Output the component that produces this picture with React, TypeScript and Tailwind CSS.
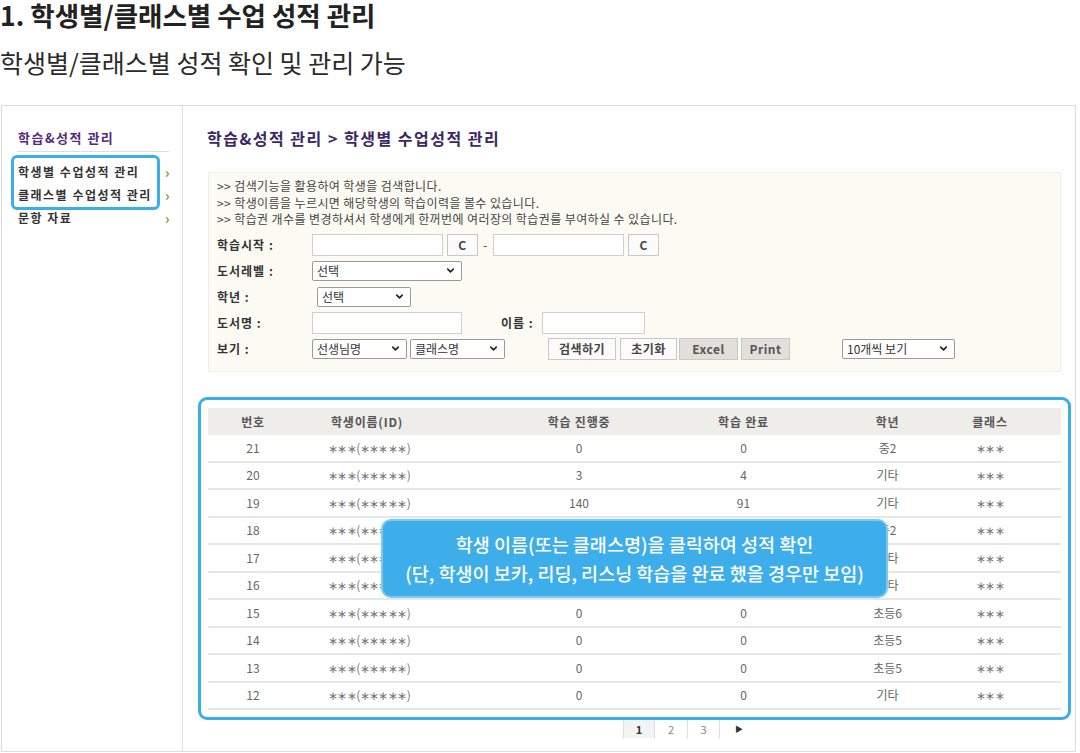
import { ChevronDown } from 'lucide-react';

const ROWS = [
    { no: 21, ing: '0', done: '0', grade: '중2' },
    { no: 20, ing: '3', done: '4', grade: '기타' },
    { no: 19, ing: '140', done: '91', grade: '기타' },
    { no: 18, ing: '0', done: '0', grade: '중2' },
    { no: 17, ing: '0', done: '0', grade: '기타' },
    { no: 16, ing: '0', done: '0', grade: '기타' },
    { no: 15, ing: '0', done: '0', grade: '초등6' },
    { no: 14, ing: '0', done: '0', grade: '초등5' },
    { no: 13, ing: '0', done: '0', grade: '초등5' },
    { no: 12, ing: '0', done: '0', grade: '기타' },
];

const MENU = ['학생별 수업성적 관리', '클래스별 수업성적 관리', '문항 자료'];

function Select({ label, className }: { label: string; className: string }) {
    return (
        <div className={`flex items-center justify-between h-[20px] bg-white border border-[#9a9a9a] rounded-[2px] pl-[4px] pr-[5px] text-[12px] text-[#333] ${className}`}>
            <span>{label}</span>
            <ChevronDown size={11} strokeWidth={3.5} className="text-[#222]" />
        </div>
    );
}

function Input({ className }: { className: string }) {
    return <div className={`h-[22px] bg-white border border-[#cfcfcf] ${className}`} />;
}

function Btn({ label, gray, className }: { label: string; gray?: boolean; className: string }) {
    return (
        <div className={`h-[22px] flex items-center justify-center border border-[#c8c8c8] text-[12px] font-bold tracking-[0.5px] ${gray ? 'bg-[#e2dfda] text-[#555]' : 'bg-[#fbfbfb] text-[#444]'} ${className}`}>
            {label}
        </div>
    );
}

export default function App() {
    return (
        <div className="w-[1080px] h-[753px] overflow-hidden bg-white font-['Noto_Sans_CJK_KR',sans-serif] text-[#222]">
            {/* Heading */}
            <h1 className="text-[26.5px] leading-[30px] font-bold">1. 학생별/클래스별 수업 성적 관리</h1>
            <p className="mt-[17px] text-[25px] leading-[30px] text-[#2a2a2a]">학생별/클래스별 성적 확인 및 관리 가능</p>

            {/* Screenshot frame */}
            <div className="mt-[28px] ml-[1px] w-[1075px] h-[647px] flex border border-[#dcdcdc]">
                {/* Sidebar */}
                <aside className="relative w-[181px] shrink-0 border-r border-[#e0e0e0] pt-[24px]">
                    <div className="pl-[16px] text-[13px] leading-[15px] font-bold tracking-[1.5px] text-[#552b7a]">학습&amp;성적 관리</div>
                    <div className="ml-[15px] w-[152px] mt-[6px] border-b border-[#dedede]" />
                    <ul className="mt-[8px] pl-[16px] w-[169px]">
                        {MENU.map(m => (
                            <li key={m} className="flex items-center justify-between h-[23px] text-[12px] font-bold tracking-[1.5px] text-[#333]">
                                <span>{m}</span>
                                <span className="text-[14px] leading-none font-bold text-[#9c8634]">›</span>
                            </li>
                        ))}
                    </ul>
                    <div className="absolute left-[9px] top-[49px] w-[149px] h-[55px] border-[3px] border-[#3aaeea] rounded-[6px]" />
                </aside>

                {/* Main */}
                <main className="flex-1 pt-[22px] pl-[24px]">
                    <div className="text-[16px] leading-[20px] font-bold tracking-[1.5px] text-[#3e2762]">학습&amp;성적 관리 &gt; 학생별 수업성적 관리</div>

                    {/* Search panel */}
                    <div className="mt-[24px] ml-[1px] w-[853px] h-[200px] bg-[#fcfbf3] border border-[#efeee6] pt-[5px] pl-[8px]">
                        <div className="text-[12px] leading-[16.5px] tracking-[0.4px] text-[#444]">
                            <p>&gt;&gt; 검색기능을 활용하여 학생을 검색합니다.</p>
                            <p>&gt;&gt; 학생이름을 누르시면 해당학생의 학습이력을 볼수 있습니다.</p>
                            <p>&gt;&gt; 학습권 개수를 변경하셔서 학생에게 한꺼번에 여러장의 학습권를 부여하실 수 있습니다.</p>
                        </div>
                        <div className="mt-[4px] text-[12px] font-bold tracking-[1px] text-[#333]">
                            <div className="flex items-center h-[26px]">
                                <span className="w-[95px]">학습시작 :</span>
                                <Input className="w-[131px]" />
                                <Btn label="C" className="ml-[4px] w-[31px]" />
                                <span className="mx-[5px] font-normal">-</span>
                                <Input className="w-[131px]" />
                                <Btn label="C" className="ml-[4px] w-[31px]" />
                            </div>
                            <div className="flex items-center h-[26px]">
                                <span className="w-[95px]">도서레벨 :</span>
                                <Select label="선택" className="w-[150px] font-normal tracking-normal" />
                            </div>
                            <div className="flex items-center h-[26px]">
                                <span className="w-[100px]">학년 :</span>
                                <Select label="선택" className="w-[94px] font-normal tracking-normal" />
                            </div>
                            <div className="flex items-center h-[26px]">
                                <span className="w-[95px]">도서명 :</span>
                                <Input className="w-[150px]" />
                                <span className="ml-[39px] w-[41px]">이름 :</span>
                                <Input className="w-[103px]" />
                            </div>
                            <div className="flex items-center h-[26px]">
                                <span className="w-[95px]">보기 :</span>
                                <Select label="선생님명" className="w-[95px] font-normal tracking-normal" />
                                <Select label="클래스명" className="ml-[3px] w-[95px] font-normal tracking-normal" />
                                <Btn label="검색하기" className="ml-[43px] w-[68px]" />
                                <Btn label="초기화" className="ml-[4px] w-[57px]" />
                                <Btn label="Excel" gray className="ml-[2px] w-[59px]" />
                                <Btn label="Print" gray className="ml-[3px] w-[49px]" />
                                <Select label="10개씩 보기" className="ml-[52px] w-[113px] font-normal tracking-normal" />
                            </div>
                        </div>
                    </div>

                    {/* Table */}
                    <div className="relative mt-[36px] ml-[1px] w-[853px]">
                        <div className="grid grid-cols-[90px_229px_104px_225px_63px_142px] h-[27px] items-center bg-[#eeede9] text-[12px] font-bold text-[#555] tracking-[0.8px]">
                            <span className="text-center">번호</span>
                            <span className="pl-[33px]">학생이름(ID)</span>
                            <span className="text-center">학습 진행중</span>
                            <span className="text-center">학습 완료</span>
                            <span className="text-center">학년</span>
                            <span className="text-center">클래스</span>
                        </div>
                        {ROWS.map(r => (
                            <div key={r.no} className="grid grid-cols-[90px_229px_104px_225px_63px_142px] h-[27.5px] items-center border-b-2 border-[#e6e6e6] text-[12px] text-[#666]">
                                <span className="text-center">{r.no}</span>
                                <span className="pl-[30px] tracking-[-0.6px] text-[#777]">∗∗∗(∗∗∗∗∗)</span>
                                <span className="text-center">{r.ing}</span>
                                <span className="text-center">{r.done}</span>
                                <span className="text-center">{r.grade}</span>
                                <span className="text-center tracking-[-0.6px] text-[#777]">∗∗∗</span>
                            </div>
                        ))}

                        {/* Annotation frame */}
                        <div className="absolute -left-[10px] -right-[10px] -top-[11px] -bottom-[10px] border-[3px] border-[#3aaeea] rounded-[9px]" />

                        {/* Callout */}
                        <div className="absolute left-[173px] top-[111px] w-[507px] h-[79px] flex flex-col items-center justify-center bg-[#3eaeea] border-2 border-[#7cc9f2] rounded-[10px] text-white text-[18.5px] leading-[29px] font-medium">
                            <span>학생 이름(또는 클래스명)을 클릭하여 성적 확인</span>
                            <span>(단, 학생이 보카, 리딩, 리스닝 학습을 완료 했을 경우만 보임)</span>
                        </div>
                    </div>

                    {/* Pagination */}
                    <div className="mt-[10px] ml-[416px] flex items-center h-[18px] text-[11px] text-[#888]">
                        <span className="w-[32px] h-full flex items-center justify-center border-x border-[#dedede] bg-[#f3f3f3] font-bold text-[#333]">1</span>
                        <span className="w-[33px] h-full flex items-center justify-center border-r border-[#dedede]">2</span>
                        <span className="w-[32px] h-full flex items-center justify-center border-r border-[#dedede]">3</span>
                        <span className="ml-[15px] text-[8px] text-[#333]">▶</span>
                    </div>
                </main>
            </div>
        </div>
    );
}
